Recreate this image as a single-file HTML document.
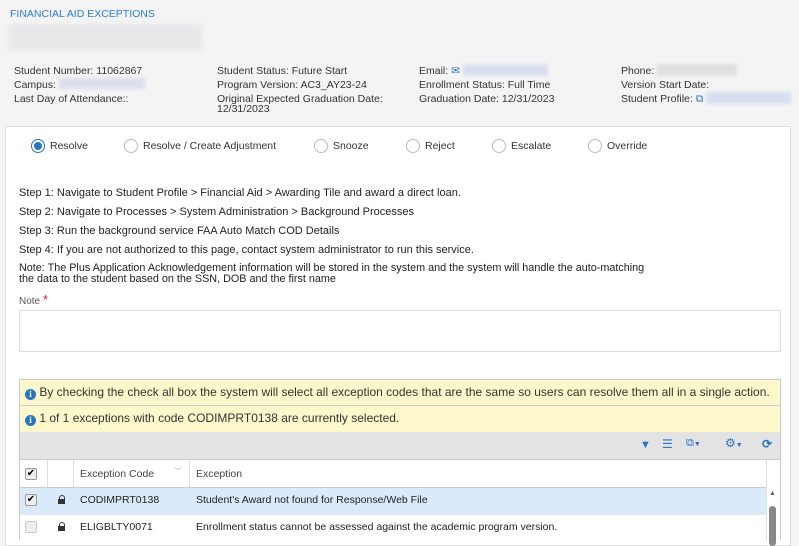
<!DOCTYPE html>
<html><head><style>
*{box-sizing:border-box;margin:0;padding:0}
body{width:799px;height:539px;overflow:hidden;background:#f4f4f4;font-family:"Liberation Sans",sans-serif;font-size:10.5px;color:#333;position:relative}
.a{position:absolute;white-space:nowrap}
.blur{position:absolute;background:#dcdde3;filter:blur(2px);border-radius:3px}
.card{position:absolute;left:5px;top:126px;width:786px;height:420px;background:#fff;border:1px solid #ddd}
.rad{position:absolute;width:14px;height:14px;border:1px solid #bbb;border-radius:50%;background:#fff}
.sel{border-color:#2a74c4}
.sel:after{content:"";position:absolute;left:2px;top:2px;width:8px;height:8px;border-radius:50%;background:#2a74c4}
.yl{position:absolute;left:19px;width:762px;background:#fcf8cc;border:1px solid #ccc;font-size:12px;padding:5px 0 0 5px;color:#333}
.i{display:inline-block;width:11px;height:11px;border-radius:50%;background:#2a74c4;color:#fff;font-size:9px;font-weight:bold;text-align:center;line-height:11px;font-family:"Liberation Serif",serif;vertical-align:-1px}
.cb{position:absolute;width:12px;height:12px;border:1px solid #999;background:#eee;font-size:10px;line-height:10px;text-align:center;color:#000;border-radius:2px}
.vl{position:absolute;width:1px;background:#ddd}
.lk{position:absolute;width:7px;height:5px;background:#333}
.lk:before{content:"";position:absolute;left:1px;top:-4px;width:4px;height:5px;border:1px solid #333;border-bottom:none;border-radius:3px 3px 0 0}
.st{position:absolute;left:19px;font-size:11px;color:#222;white-space:nowrap}
</style></head><body>
<div class="a" style="left:10px;top:8px;color:#2a7ed0;font-size:10.5px">FINANCIAL AID EXCEPTIONS</div>
<div class="blur" style="left:8px;top:24px;width:194px;height:26px;background:#e8e8ea"></div>
<div class="a" style="left:14px;top:64px;line-height:14px">Student Number: 11062867<br>Campus: <span style="display:inline-block;width:86px;height:11px;background:#dde;filter:blur(1.5px);vertical-align:-1px"></span><br>Last Day of Attendance::</div>
<div class="a" style="left:217px;top:64px;line-height:14px">Student Status: Future Start<br>Program Version: AC3_AY23-24<br>Original Expected Graduation Date:<br><span style="position:relative;top:-4px">12/31/2023</span></div>
<div class="a" style="left:419px;top:64px;line-height:14px">Email: <span style="color:#2a74c4">✉</span> <span style="display:inline-block;width:85px;height:12px;background:#d8e0f0;filter:blur(1.5px);vertical-align:-2px"></span><br>Enrollment Status: Full Time<br>Graduation Date: 12/31/2023</div>
<div class="a" style="left:621px;top:64px;line-height:14px">Phone: <span style="display:inline-block;width:80px;height:12px;background:#e0e0e2;filter:blur(1.5px);vertical-align:-2px"></span><br>Version Start Date:<br>Student Profile: <span style="color:#2a74c4">⧉</span> <span style="display:inline-block;width:85px;height:12px;background:#d6dff0;filter:blur(1.5px);vertical-align:-2px"></span></div>
<div class="card"></div>
<div class="rad sel" style="left:31px;top:139px"></div><div class="a" style="left:50px;top:140px">Resolve</div>
<div class="rad" style="left:124px;top:139px"></div><div class="a" style="left:143px;top:140px">Resolve / Create Adjustment</div>
<div class="rad" style="left:314px;top:139px"></div><div class="a" style="left:333px;top:140px">Snooze</div>
<div class="rad" style="left:406px;top:139px"></div><div class="a" style="left:425px;top:140px">Reject</div>
<div class="rad" style="left:492px;top:139px"></div><div class="a" style="left:511px;top:140px">Escalate</div>
<div class="rad" style="left:588px;top:139px"></div><div class="a" style="left:607px;top:140px">Override</div>
<div class="st" style="top:187px">Step 1: Navigate to Student Profile &gt; Financial Aid &gt; Awarding Tile and award a direct loan.</div>
<div class="st" style="top:206px">Step 2: Navigate to Processes &gt; System Administration &gt; Background Processes</div>
<div class="st" style="top:225px">Step 3: Run the background service FAA Auto Match COD Details</div>
<div class="st" style="top:244px">Step 4: If you are not authorized to this page, contact system administrator to run this service.</div>
<div class="st" style="top:263px;line-height:11px;font-size:10.8px">Note: The Plus Application Acknowledgement information will be stored in the system and the system will handle the auto-matching<br>the data to the student based on the SSN, DOB and the first name</div>
<div class="a" style="left:19px;top:292px;font-size:10px;color:#555">Note <span style="color:#d22;font-size:13px">*</span></div>
<div style="position:absolute;left:19px;top:310px;width:762px;height:42px;border:1px solid #ddd"></div>
<div class="yl" style="top:379px;height:27px"><span class="i">i</span> By checking the check all box the system will select all exception codes that are the same so users can resolve them all in a single action.</div>
<div class="yl" style="top:405px;height:28px"><span class="i">i</span> 1 of 1 exceptions with code CODIMPRT0138 are currently selected.</div>
<div style="position:absolute;left:19px;top:432px;width:762px;height:28px;background:#e3e3e3;border:1px solid #ccc;border-top:none"></div>
<div class="a" style="left:640px;top:439px;color:#2a74c4;font-size:11px">▼</div>
<div class="a" style="left:662px;top:437px;color:#2a74c4;font-size:12px">☰</div>
<div class="a" style="left:686px;top:437px;color:#2a74c4;font-size:11px">⧉<span style="font-size:7px">▼</span></div>
<div class="a" style="left:725px;top:436px;color:#2a74c4;font-size:12px">⚙<span style="font-size:7px">▼</span></div>
<div class="a" style="left:762px;top:437px;color:#2a74c4;font-size:12px;font-weight:bold">⟳</div>
<div style="position:absolute;left:19px;top:460px;width:762px;height:80px;border-left:1px solid #ccc;border-right:1px solid #ccc"></div>
<div style="position:absolute;left:20px;top:487px;width:746px;height:27px;background:#dbeafa;border-top:1px solid #ccc"></div>
<div style="position:absolute;left:20px;top:514px;width:746px;height:1px;background:#e6e6e6"></div>
<div class="vl" style="left:47px;top:460px;height:27px"></div>
<div class="vl" style="left:73px;top:460px;height:27px"></div>
<div class="vl" style="left:189px;top:460px;height:27px"></div>
<div class="vl" style="left:766px;top:460px;height:80px"></div>
<div class="cb" style="left:25px;top:468px">✔</div>
<div class="a" style="left:80px;top:468px;color:#444">Exception Code</div>
<div class="a" style="left:174px;top:466px;color:#aaa;font-size:8px">﹀</div>
<div class="a" style="left:196px;top:468px;color:#444">Exception</div>
<div class="cb" style="left:25px;top:494px">✔</div>
<div class="lk" style="left:58px;top:499px"></div>
<div class="a" style="left:80px;top:494px;color:#222">CODIMPRT0138</div>
<div class="a" style="left:196px;top:494px;color:#222">Student's Award not found for Response/Web File</div>
<div class="cb" style="left:25px;top:521px;border-color:#ccc"></div>
<div class="lk" style="left:58px;top:526px"></div>
<div class="a" style="left:80px;top:521px;color:#222">ELIGBLTY0071</div>
<div class="a" style="left:196px;top:521px;color:#222">Enrollment status cannot be assessed against the academic program version.</div>
<div class="a" style="left:769px;top:490px;font-size:7px;color:#666">▲</div>
<div style="position:absolute;left:769px;top:506px;width:7px;height:40px;background:#888;border-radius:4px"></div>
</body></html>
